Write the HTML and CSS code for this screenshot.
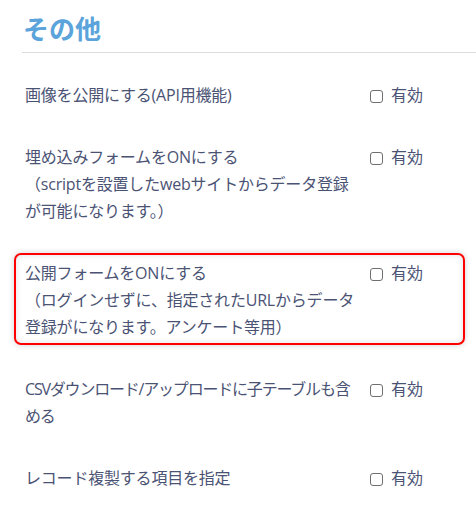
FILE: index.html
```html
<!DOCTYPE html>
<html>
	<head>
		<meta charset="utf-8">
		<title>その他</title>
		<link rel="stylesheet" href="styles.css">
	</head>
	<body>
		<div class="section">
			<h2 class="title">その他</h2>
			<div class="list">
				<div class="row">
					<div class="label">画像を公開にする(API用機能)</div>
					<label class="check"><input type="checkbox"><span>有効</span></label>
				</div>
				<div class="row">
					<div class="label">埋め込みフォームをONにする<br>（scriptを設置したwebサイトからデータ登録<br>が可能になります。）</div>
					<label class="check"><input type="checkbox"><span>有効</span></label>
				</div>
				<div class="row mark">
					<div class="label">公開フォームをONにする<br>（ログインせずに、指定されたURLからデータ<br>登録がになります。アンケート等用）</div>
					<label class="check"><input type="checkbox"><span>有効</span></label>
				</div>
				<div class="row">
					<div class="label tight">CSVダウンロード/アップロードに子テーブルも含<br>める</div>
					<label class="check"><input type="checkbox"><span>有効</span></label>
				</div>
				<div class="row">
					<div class="label">レコード複製する項目を指定</div>
					<label class="check"><input type="checkbox"><span>有効</span></label>
				</div>
			</div>
		</div>
	</body>
</html>
```

FILE: styles.css
```css
*{
	margin: 0;
	padding: 0;
	box-sizing: border-box;
}
body{
	background-color: #fff;
	font-family: "Open Sans", "Noto Sans CJK JP", sans-serif;
	color: #4b5374;
}
.title{
	margin-left: 22px;
	padding: 11px 0 5px 1px;
	font-size: 26px;
	line-height: 36px;
	font-weight: bold;
	color: #5ba4db;
	border-bottom: 1px solid #dcdcdc;
}
.list{
	display: flex;
	flex-direction: column;
	gap: 35px;
	padding: 29px 22px 0 25px;
}
.row{
	display: grid;
	grid-template-columns: 345px 1fr;
	font-size: 16px;
	line-height: 27px;
}
.label{
	white-space: nowrap;
	letter-spacing: -0.2px;
}
.label.tight{
	letter-spacing: -1.2px;
}
.mark{
	margin: -7px -11px -4px -11px;
	padding: 5px 9px 2px 9px;
	border: 2px solid #f00;
	border-radius: 7px;
	box-shadow: 0 0 6px rgba(0, 0, 0, 0.18), inset 0 0 6px rgba(0, 0, 0, 0.12);
}
.check{
	display: flex;
	align-items: flex-start;
	gap: 8px;
}
.check input{
	appearance: none;
	width: 13px;
	height: 13px;
	margin-top: 8px;
	border: 1px solid #6f6f6f;
	border-radius: 3px;
	background-color: #fff;
}
```
